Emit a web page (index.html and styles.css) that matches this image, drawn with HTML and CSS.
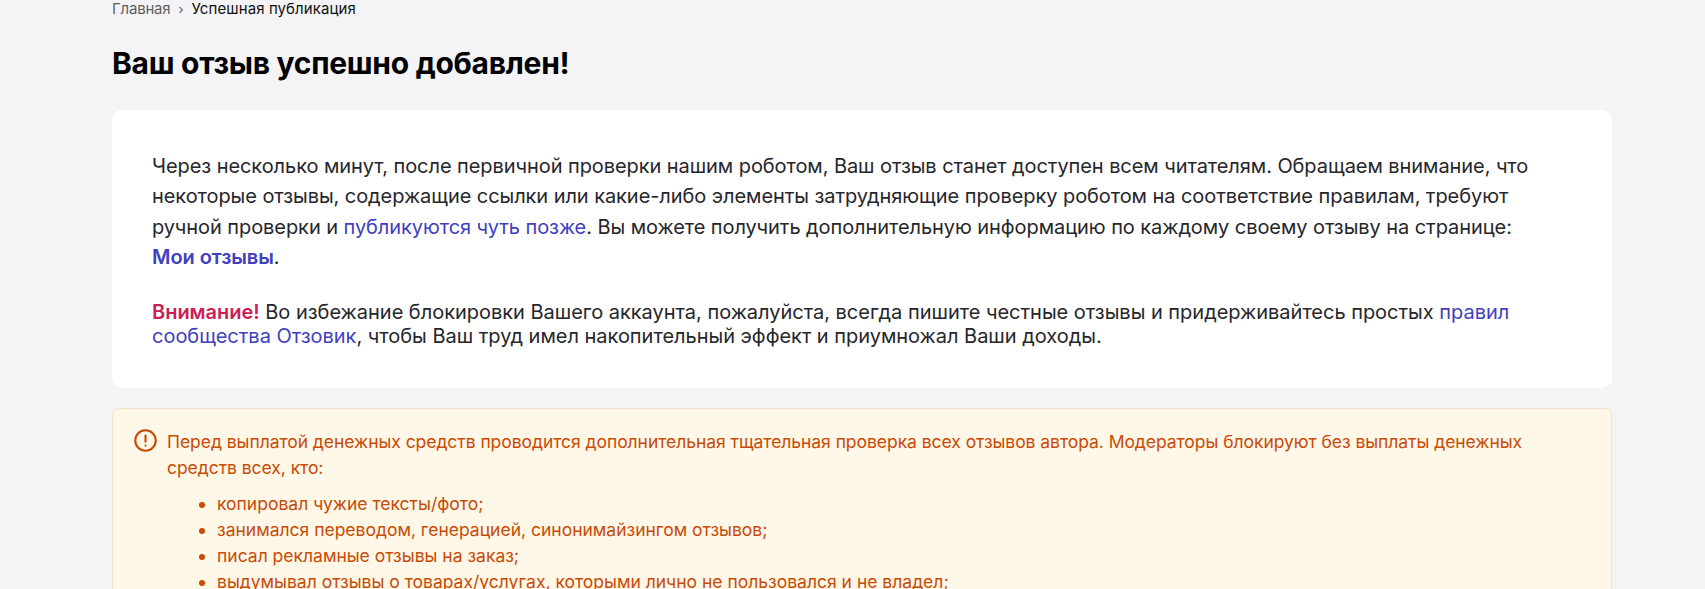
FILE: index.html
```html
<!DOCTYPE html>
<html lang="ru">
<head>
<meta charset="utf-8">
<title>Успешная публикация</title>
<link rel="stylesheet" href="styles.css">
</head>
<body>
<main class="page">
  <nav class="crumbs"><a class="crumb-link" href="#">Главная</a><span class="crumb-sep">›</span><span class="crumb-current">Успешная публикация</span></nav>
  <h1 class="title">Ваш отзыв успешно добавлен!</h1>
  <section class="card">
    <p class="lead">Через несколько минут, после первичной проверки нашим роботом, Ваш отзыв станет доступен всем читателям. Обращаем внимание, что некоторые отзывы, содержащие ссылки или какие-либо элементы затрудняющие проверку роботом на соответствие правилам, требуют ручной проверки и <a class="link" href="#">публикуются чуть позже</a>. Вы можете получить дополнительную информацию по каждому своему отзыву на странице: <a class="link strong" href="#">Мои отзывы</a>.</p>
    <p class="note"><b class="warn">Внимание!</b> Во избежание блокировки Вашего аккаунта, пожалуйста, всегда пишите честные отзывы и придерживайтесь простых <a class="link" href="#">правил сообщества Отзовик</a>, чтобы Ваш труд имел накопительный эффект и приумножал Ваши доходы.</p>
  </section>
  <section class="alert">
    <svg class="alert-icon" viewBox="0 0 24 24" width="23" height="23" fill="none" stroke="#c84b06" stroke-width="2.2" stroke-linecap="round"><circle cx="12" cy="12" r="10.7"/><path d="M12 6.8v6.4"/><path d="M12 17.2v.1"/></svg>
    <div class="alert-body">
      <p class="alert-text">Перед выплатой денежных средств проводится дополнительная тщательная проверка всех отзывов автора. Модераторы блокируют без выплаты денежных средств всех, кто:</p>
      <ul class="alert-list">
        <li>копировал чужие тексты/фото;</li>
        <li>занимался переводом, генерацией, синонимайзингом отзывов;</li>
        <li>писал рекламные отзывы на заказ;</li>
        <li>выдумывал отзывы о товарах/услугах, которыми лично не пользовался и не владел;</li>
      </ul>
    </div>
  </section>
</main>
</body>
</html>
```
FILE: styles.css
```css
* { box-sizing: border-box; }
html, body { height: 100%; overflow: hidden; }
body {
  margin: 0;
  background: #f4f4f6;
  font-family: Inter, "Noto Sans", sans-serif;
  color: #26262b;
}
.page { width: 1500px; margin: 0 auto 0 112px; }
.crumbs { display: flex; align-items: center; height: 18px; font-size: 15px; line-height: 18px; }
.crumb-link { color: #5f5f66; text-decoration: none; letter-spacing: -0.2px; }
.crumb-sep { margin: 0 8px; color: #5f5f66; font-size: 13px; }
.crumb-current { color: #111; letter-spacing: 0.1px; }
.title { margin: 26px 0 28px; font-size: 30px; line-height: 38px; font-weight: 700; color: #000; letter-spacing: -0.28px; }
.card { background: #fff; border-radius: 10px; padding: 41px 40px 0; height: 278px; }
.lead, .note { margin: 0; font-size: 20px; }
.lead { line-height: 30.4px; letter-spacing: -0.07px; }
.note { margin-top: 27px; line-height: 24px; letter-spacing: -0.02px; }
.link { color: #4040c0; text-decoration: none; }
.strong { font-weight: 600; white-space: nowrap; }
.warn { color: #cc1f55; font-weight: 600; }
.alert {
  display: flex;
  gap: 10px;
  margin-top: 20px;
  padding: 20px 22px 0 21px;
  height: 260px;
  background: #fff7e8;
  border: 1px solid #f5e2c6;
  border-radius: 8px;
  color: #c84b06;
  font-size: 17.5px;
  line-height: 26px;
}
.alert-icon { flex: none; }
.alert-text { margin: 0; letter-spacing: -0.05px; }
.alert-list { margin: 10px 0 0; padding-left: 50px; }
.alert-list li { line-height: 26px; }
```
